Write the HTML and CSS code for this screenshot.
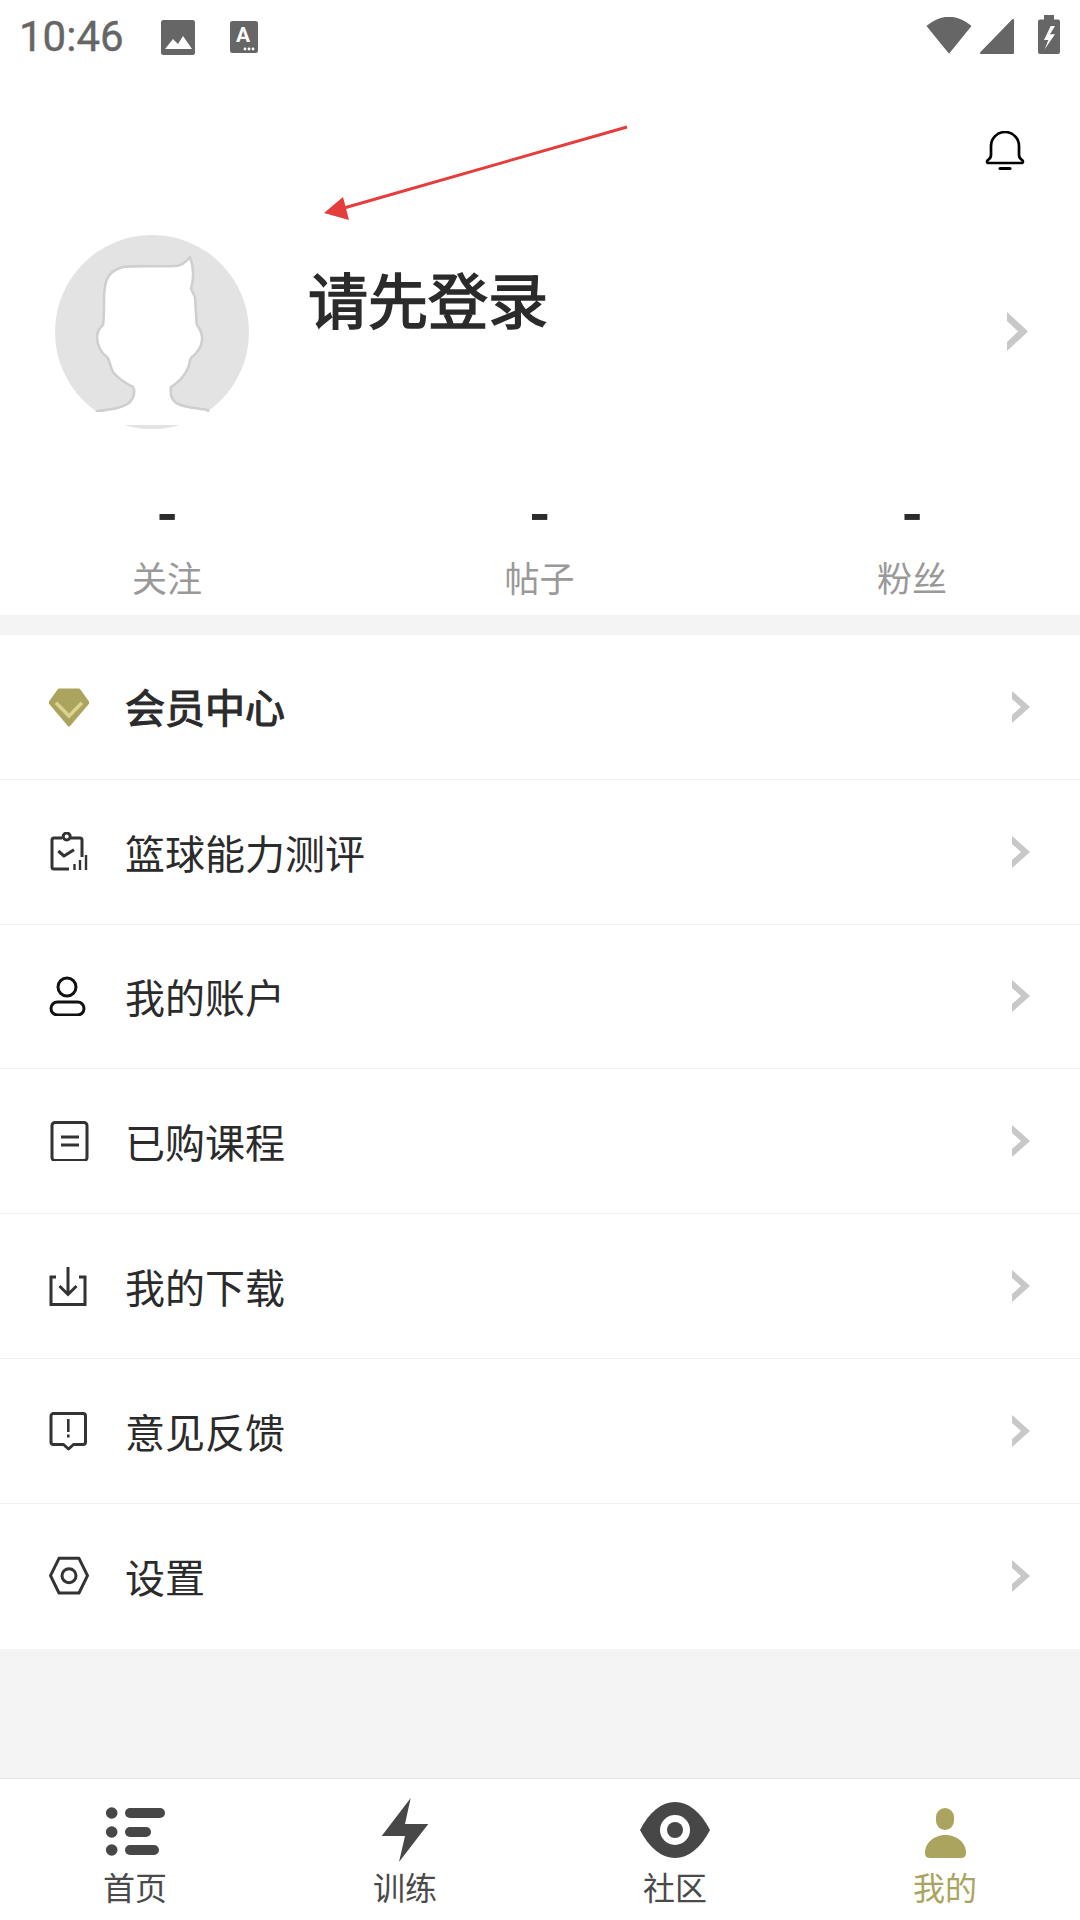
FILE: index.html
```html
<!DOCTYPE html>
<html lang="zh-CN">
<head>
    <meta charset="UTF-8">
    <meta name="viewport" content="width=device-width, initial-scale=1.0">
    <title>我的</title>
    <link rel="stylesheet" href="styles.css">
</head>
<body>

    <div class="page">
        <!-- Status bar -->
        <div class="status-bar">
            <span class="status-time">10:46</span>
            <svg class="status-photo" width="34" height="35" viewBox="0 0 34 35">
                <rect width="34" height="35" rx="2.5" fill="#666"/>
                <path d="M4 29 L12 19 L17 24 L22 16 L31 29 Z" fill="#fff"/>
            </svg>
            <svg class="status-font" width="28" height="32" viewBox="0 0 28 32">
                <rect width="28" height="32" rx="2.5" fill="#666"/>
                <text x="13" y="21" class="status-font-letter">A</text>
                <circle cx="15" cy="28" r="1.4" fill="#fff"/>
                <circle cx="19" cy="28" r="1.4" fill="#fff"/>
                <circle cx="23" cy="28" r="1.4" fill="#fff"/>
            </svg>
            <div class="status-right">
                <svg class="status-wifi" width="46" height="37" viewBox="0 0 46 37">
                    <path d="M1.5 9 Q23 -8 44.5 9 L23 35.5 Z" fill="#666" stroke="#666" stroke-width="1.5" stroke-linejoin="round"/>
                </svg>
                <svg class="status-signal" width="34" height="35" viewBox="0 0 34 35">
                    <path d="M33 1 V34 H1 Z" fill="#666" stroke="#666" stroke-width="2" stroke-linejoin="round"/>
                </svg>
                <svg class="status-battery" width="22" height="39" viewBox="0 0 22 39">
                    <rect x="6" width="10" height="6" fill="#666"/>
                    <rect y="4.5" width="22" height="34.5" rx="2" fill="#666"/>
                    <path d="M12.7 11 L6 25 H10.3 L6.7 34.3 L17 19.3 H12 L17 11 Z" fill="#fff"/>
                </svg>
            </div>
        </div>

        <!-- Red arrow drawn over the screenshot -->
        <svg class="annotation" width="320" height="110" viewBox="320 120 320 110">
            <line x1="627" y1="127" x2="344" y2="208" stroke="#e53c3c" stroke-width="3"/>
            <polygon points="324,213 343,197 349,220" fill="#e53c3c"/>
        </svg>

        <div class="top-bar">
            <svg width="40" height="40" viewBox="0 0 40 40" fill="none" stroke="#000">
                <path d="M6 24 V15 A14 14 0 0 1 34 15 V24 Q34 27 37 29 Q39 31 37 32 H3 Q1 31 3 29 Q6 27 6 24 Z" stroke-width="2.7" stroke-linejoin="round"/>
                <line x1="15" y1="37.5" x2="25" y2="37.5" stroke-width="3" stroke-linecap="round"/>
            </svg>
        </div>

        <div class="profile">
            <svg class="avatar" width="215" height="215" viewBox="0 0 215 215">
                <circle cx="107" cy="107" r="97" fill="#e3e3e3"/>
                <path d="M145 32 C148 40 150 50 146 64 L150 72 C151 85 151 95 152 100 C154 103 158 108 157 115 C157 122 152 128 146 133 C144 136 145 140 143 143 C140 150 134 157 126 162 C125 167 125 172 130 177 C136 182 150 183 163 185 V190 H52 V186 C62 185 75 184 84 178 C90 172 90 165 88 162 C80 158 72 152 68 147 C65 142 65 135 62 132 C56 128 52 120 52 112 C52 105 56 102 58 100 C60 85 58 70 60 62 C61 52 66 45 78 42 C95 40 115 42 130 41 C136 41 141 37 145 32 Z" fill="#fff" stroke="#cfcfcf" stroke-width="2.6" stroke-linejoin="round"/>
                <rect x="20" y="187" width="175" height="13" fill="#fff"/>
            </svg>
            <div class="profile-name">请先登录</div>
            <svg class="profile-arrow" width="21" height="39" viewBox="0 0 21 39">
                <path d="M0 0 L21 19.5 L0 39 V30 L11 19.5 L0 9 Z" fill="#c8c8c8"/>
            </svg>
        </div>

        <div class="stats">
            <div class="stat">
                <div class="stat-value">-</div>
                <div class="stat-label">关注</div>
            </div>
            <div class="stat">
                <div class="stat-value">-</div>
                <div class="stat-label">帖子</div>
            </div>
            <div class="stat">
                <div class="stat-value">-</div>
                <div class="stat-label">粉丝</div>
            </div>
        </div>

        <!-- Menu list -->
        <div class="content">
            <ul class="menu">
                <li class="menu-item">
                    <svg class="menu-icon" viewBox="0 0 40 40">
                        <path d="M10 3 H30 L39 15.7 L20 38 L1 15.7 Z" fill="#aba45f" stroke="#aba45f" stroke-width="3" stroke-linejoin="round"/>
                        <path d="M7 15.7 L20 29 L33 15.7" fill="none" stroke="#d9d48f" stroke-width="3.5"/>
                    </svg>
                    <span class="menu-title menu-title-strong">会员中心</span>
                    <svg class="menu-arrow" width="18" height="32" viewBox="0 0 18 32"><path d="M0 0 L18 16 L0 32 V24 L9 16 L0 8 Z"/></svg>
                </li>
                <li class="menu-item">
                    <svg class="menu-icon" viewBox="0 0 40 40" fill="none" stroke="#333" stroke-width="3">
                        <path d="M33 25 V8 A2 2 0 0 0 31 6 H22 M13 6 H5 A2 2 0 0 0 3 8 V35 A2 2 0 0 0 5 37 H20"/>
                        <circle cx="17.7" cy="4.5" r="3.5"/>
                        <path d="M9.3 19 L15 24 L25 17.7" stroke-linejoin="round"/>
                        <path d="M25.5 38 V32 M31 38 V28 M37 38 V23" stroke-width="2.4"/>
                    </svg>
                    <span class="menu-title">篮球能力测评</span>
                    <svg class="menu-arrow" width="18" height="32" viewBox="0 0 18 32"><path d="M0 0 L18 16 L0 32 V24 L9 16 L0 8 Z"/></svg>
                </li>
                <li class="menu-item">
                    <svg class="menu-icon" viewBox="0 0 40 40" fill="none" stroke="#111" stroke-width="3">
                        <circle cx="18" cy="11" r="9"/>
                        <rect x="2" y="26" width="33" height="13" rx="6.5"/>
                    </svg>
                    <span class="menu-title">我的账户</span>
                    <svg class="menu-arrow" width="18" height="32" viewBox="0 0 18 32"><path d="M0 0 L18 16 L0 32 V24 L9 16 L0 8 Z"/></svg>
                </li>
                <li class="menu-item">
                    <svg class="menu-icon" viewBox="0 0 40 40" fill="none" stroke="#333" stroke-width="3">
                        <rect x="3" y="1.5" width="35" height="38" rx="3"/>
                        <path d="M12 16 H30 M12 24 H30"/>
                    </svg>
                    <span class="menu-title">已购课程</span>
                    <svg class="menu-arrow" width="18" height="32" viewBox="0 0 18 32"><path d="M0 0 L18 16 L0 32 V24 L9 16 L0 8 Z"/></svg>
                </li>
                <li class="menu-item">
                    <svg class="menu-icon" viewBox="0 0 40 40" fill="none" stroke="#333" stroke-width="3">
                        <path d="M7 11 H2 V38.5 H36 V11 H30"/>
                        <path d="M19 1 V28 M10.5 20 L19 28.5 L27.5 20"/>
                    </svg>
                    <span class="menu-title">我的下载</span>
                    <svg class="menu-arrow" width="18" height="32" viewBox="0 0 18 32"><path d="M0 0 L18 16 L0 32 V24 L9 16 L0 8 Z"/></svg>
                </li>
                <li class="menu-item">
                    <svg class="menu-icon" viewBox="0 0 40 40" fill="none" stroke="#333" stroke-width="3">
                        <path d="M4.5 2.5 H34 A2.5 2.5 0 0 1 36.5 5 V31 A2.5 2.5 0 0 1 34 33.5 H24.5 L19.5 38 L14.5 33.5 H4.5 A2.5 2.5 0 0 1 2 31 V5 A2.5 2.5 0 0 1 4.5 2.5 Z" stroke-linejoin="round"/>
                        <path d="M19.3 8 V21 M19.3 23.5 V26.5" stroke-width="2.6"/>
                    </svg>
                    <span class="menu-title">意见反馈</span>
                    <svg class="menu-arrow" width="18" height="32" viewBox="0 0 18 32"><path d="M0 0 L18 16 L0 32 V24 L9 16 L0 8 Z"/></svg>
                </li>
                <li class="menu-item">
                    <svg class="menu-icon" viewBox="0 0 40 40" fill="none" stroke="#333" stroke-width="3">
                        <path d="M1.5 19.7 L10 2.3 H30 L38.5 19.7 L30 37 H10 Z" stroke-linejoin="round"/>
                        <circle cx="20" cy="19.7" r="7"/>
                    </svg>
                    <span class="menu-title">设置</span>
                    <svg class="menu-arrow" width="18" height="32" viewBox="0 0 18 32"><path d="M0 0 L18 16 L0 32 V24 L9 16 L0 8 Z"/></svg>
                </li>
            </ul>
        </div>

        <!-- Bottom tabs -->
        <nav class="tabs">
            <div class="tab">
                <svg class="tab-icon" viewBox="0 0 80 64" fill="#474747">
                    <circle cx="16.7" cy="15" r="5.8"/>
                    <circle cx="16.7" cy="34" r="5.8"/>
                    <circle cx="16.7" cy="52" r="5.8"/>
                    <rect x="30" y="10" width="40" height="10" rx="5"/>
                    <rect x="30" y="29" width="26" height="10" rx="5"/>
                    <rect x="30" y="47" width="34" height="10" rx="5"/>
                </svg>
                <span>首页</span>
            </div>
            <div class="tab">
                <svg class="tab-icon" viewBox="0 0 80 64" fill="#474747">
                    <polygon points="45.7,0 16.7,38 40,38 34,64 63.3,26 40,26"/>
                </svg>
                <span>训练</span>
            </div>
            <div class="tab">
                <svg class="tab-icon" viewBox="0 0 80 64">
                    <path d="M5 32 C14 14 27 4 40 4 C53 4 66 14 75 32 C66 50 53 60 40 60 C27 60 14 50 5 32 Z" fill="#474747"/>
                    <circle cx="40" cy="32" r="15" fill="#fff"/>
                    <circle cx="40" cy="32" r="8" fill="#474747"/>
                </svg>
                <span>社区</span>
            </div>
            <div class="tab tab-active">
                <svg class="tab-icon" viewBox="0 0 80 64" fill="#aba45f">
                    <rect x="31" y="10" width="18" height="22" rx="9"/>
                    <path d="M20 55 C20 44 30 37 40.5 37 C51 37 61 44 61 55 Q61 60 56 60 H25 Q20 60 20 55 Z"/>
                </svg>
                <span>我的</span>
            </div>
        </nav>
    </div>

</body>
</html>
```

FILE: styles.css
```css
* {
    box-sizing: border-box;
}

body {
    margin: 0;
    font-family: "Noto Sans CJK SC", "Noto Sans", sans-serif;
    background-color: #fff;
    color: #2b2b2b;
}

.page {
    position: relative;
    display: flex;
    flex-direction: column;
    width: 1080px;
    height: 1920px;
    overflow: hidden;
}

.status-bar {
    display: flex;
    align-items: flex-start;
    height: 66px;
    padding: 15px 20px 0 19px;
    color: #666;
}

.status-time {
    font-family: Roboto, sans-serif;
    font-size: 42px;
    line-height: 44px;
    -webkit-text-stroke: 0.4px #666;
}

.status-photo {
    margin: 5px 0 0 37px;
}

.status-font {
    margin: 6px 0 0 35px;
}

.status-font-letter {
    font-family: Roboto, sans-serif;
    font-size: 21px;
    font-weight: 700;
    text-anchor: middle;
    fill: #fff;
}

.status-right {
    display: flex;
    align-items: flex-start;
    margin-left: auto;
}

.status-wifi {
    margin: 2px 8px 0 0;
}

.status-signal {
    margin: 4px 24px 0 0;
}

.annotation {
    position: absolute;
    left: 320px;
    top: 120px;
}

.top-bar {
    display: flex;
    justify-content: flex-end;
    height: 169px;
    padding: 65px 55px 0 0;
}

.profile {
    display: flex;
    align-items: flex-start;
    height: 194px;
    padding: 0 52px 0 45px;
}

.avatar {
    flex-shrink: 0;
    margin-top: -10px;
}

.profile-name {
    margin: 23px 0 0 48px;
    font-size: 60px;
    line-height: 80px;
    -webkit-text-stroke: 1.6px #2b2b2b;
}

.profile-arrow {
    margin: 77px 0 0 auto;
}

.stats {
    display: flex;
    justify-content: space-between;
    height: 186px;
    padding: 50px 88px 0 87px;
}

.stat {
    width: 160px;
    text-align: center;
}

.stat-value {
    font-size: 56px;
    line-height: 60px;
    font-weight: 700;
}

.stat-label {
    margin-top: 14px;
    font-size: 35px;
    line-height: 48px;
    color: #999;
}

.content {
    flex: 1;
    padding-top: 20px;
    background-color: #f4f4f4;
}

.menu {
    margin: 0;
    padding: 0;
    list-style: none;
    background-color: #fff;
}

.menu-item {
    display: flex;
    align-items: center;
    height: 144.8px;
    padding: 0 50px 0 49px;
    border-bottom: 1px solid #f0f0f0;
}

.menu-item:last-child {
    border-bottom: none;
}

.menu-icon {
    width: 40px;
    height: 40px;
    flex-shrink: 0;
}

.menu-title {
    margin-left: 36px;
    font-size: 40px;
    line-height: 56px;
}

.menu-title-strong {
    margin-top: -2px;
    -webkit-text-stroke: 1.1px #2b2b2b;
}

.menu-arrow {
    margin-left: auto;
    fill: #c8c8c8;
}

.tabs {
    display: grid;
    grid-template-columns: repeat(4, 1fr);
    height: 142px;
    padding-top: 19px;
    border-top: 1px solid #e4e4e4;
    background-color: #fff;
}

.tab {
    display: flex;
    flex-direction: column;
    align-items: center;
    font-size: 32px;
    line-height: 42px;
    color: #4a4a4a;
}

.tab-icon {
    width: 80px;
    height: 64px;
    margin-bottom: 3px;
}

.tab-active {
    color: #aba45f;
}
```
